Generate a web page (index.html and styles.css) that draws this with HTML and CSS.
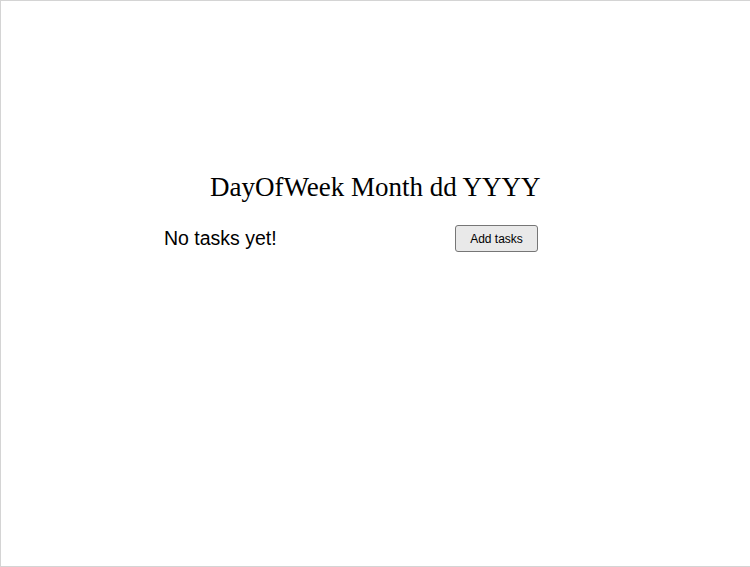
FILE: index.html
```html
<!DOCTYPE html>
<html>
<head>
<meta charset="utf-8">
<link rel="stylesheet" href="styles.css">
</head>
<body>
<div class="frame">
  <div class="app">
    <h1 class="date">DayOfWeek Month dd YYYY</h1>
    <div class="row">
      <p class="empty">No tasks yet!</p>
      <button class="add">Add tasks</button>
    </div>
  </div>
</div>
</body>
</html>
```
FILE: styles.css
```css
html, body { margin: 0; padding: 0; background: #fff; }
.frame {
  box-sizing: border-box;
  width: 750px;
  height: 567px;
  border: 1px solid #d4d4d4;
  border-right: none;
  padding-top: 170px;
}
.app {
  width: 375px;
  margin-left: 163px;
}
.date {
  margin: 0 0 0 46px;
  white-space: nowrap;
  font-family: "Liberation Serif", serif;
  font-weight: normal;
  font-size: 27px;
  line-height: 32px;
  color: #000;
}
.row {
  display: flex;
  justify-content: space-between;
  align-items: center;
  margin-top: 22px;
}
.empty {
  margin: 0;
  font-family: "Liberation Sans", Arial, sans-serif;
  font-size: 19.5px;
  color: #000;
}
.add {
  font-family: "Liberation Sans", Arial, sans-serif;
  font-size: 12px;
  width: 83px;
  height: 27px;
  margin-right: 1px;
  background: #e9e9e9;
  border: 1px solid #767676;
  border-radius: 3px;
  color: #000;
  padding: 0;
}
```
